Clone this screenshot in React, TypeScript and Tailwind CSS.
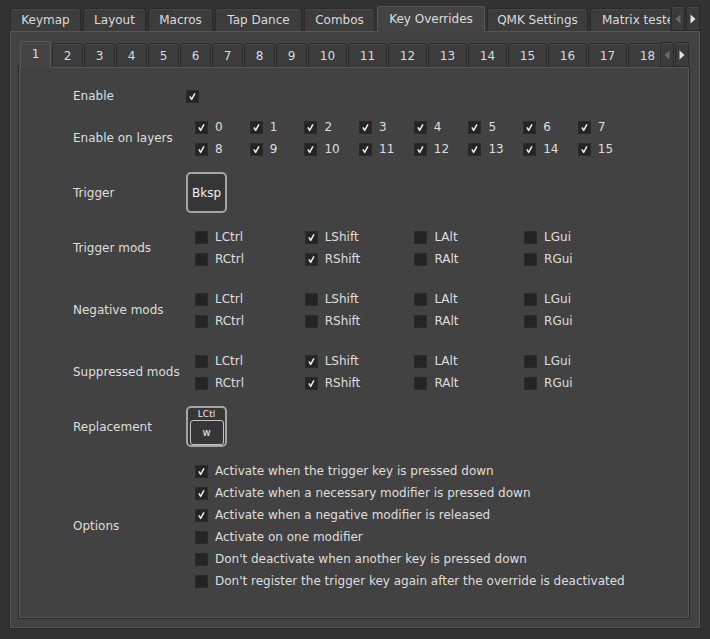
import React from 'react';

const topTabs = [
    { label: 'Keymap', w: 'w-[71px]' },
    { label: 'Layout', w: 'w-[63px]' },
    { label: 'Macros', w: 'w-[65px]' },
    { label: 'Tap Dance', w: 'w-[87px]' },
    { label: 'Combos', w: 'w-[71px]' },
    { label: 'Key Overrides', w: 'w-[108px]', active: true },
    { label: 'QMK Settings', w: 'w-[101px]' },
    { label: 'Matrix tester', w: 'w-[104px]' },
];

const numTabs = Array.from({ length: 18 }, (_, i) => i + 1);

const Tick = () => (
    <svg width="13" height="13" viewBox="0 0 13 13" className="block">
        <path d="M3.4 6.4 L5.5 10 L9.4 2.8" stroke="#ededed" strokeWidth="1.8" fill="none" strokeLinejoin="round" />
    </svg>
);

const Box: React.FC<{ on?: boolean }> = ({ on }) => (
    <span className="w-[13px] h-[13px] shrink-0 bg-[#242424] border border-[#2b2b2b] flex items-center justify-center overflow-hidden">
        {on && <Tick />}
    </span>
);

const Check: React.FC<{ on?: boolean; label: string }> = ({ on, label }) => (
    <div className="h-[22px] flex items-center gap-[7px]">
        <Box on={on} />
        <span className="whitespace-nowrap">{label}</span>
    </div>
);

const Arrow: React.FC<{ dir: 'left' | 'right' }> = ({ dir }) => (
    <div className="w-[14px] h-[25px] bg-[#3b3b3b] border border-[#2a2a2a] rounded-[2px] shadow-[inset_0_1px_0_#4a4a4a] flex items-center justify-center shrink-0">
        <svg width="6" height="10" viewBox="0 0 6 10">
            {dir === 'left' ? (
                <path d="M5.5 0.5 L0.5 5 L5.5 9.5 Z" fill="#6b6b6b" />
            ) : (
                <path d="M0.5 0.5 L5.5 5 L0.5 9.5 Z" fill="#e6e6e6" />
            )}
        </svg>
    </div>
);

const Row: React.FC<{ label: string; className?: string; children: React.ReactNode }> = ({ label, className, children }) => (
    <div className={`flex items-center ${className ?? ''}`}>
        <div className="w-[113px] shrink-0 whitespace-nowrap">{label}</div>
        {children}
    </div>
);

const Mods: React.FC<{ checked: string[] }> = ({ checked }) => {
    const names = ['LCtrl', 'LShift', 'LAlt', 'LGui', 'RCtrl', 'RShift', 'RAlt', 'RGui'];
    return (
        <div className="ml-[9px] grid grid-cols-[repeat(4,109.7px)]">
            {names.map((n) => (
                <Check key={n} label={n} on={checked.includes(n)} />
            ))}
        </div>
    );
};

const options = [
    { label: 'Activate when the trigger key is pressed down', on: true },
    { label: 'Activate when a necessary modifier is pressed down', on: true },
    { label: 'Activate when a negative modifier is released', on: true },
    { label: 'Activate on one modifier', on: false },
    { label: "Don't deactivate when another key is pressed down", on: false },
    { label: "Don't register the trigger key again after the override is deactivated", on: false },
];

export default function App() {
    const layers = [0, 1, 2, 3, 4, 5, 6, 7, 8, 9, 10, 11, 12, 13, 14, 15];
    return (
        <div className="w-[710px] h-[639px] bg-[#323232] px-[10px] pt-[6px] text-[12px] text-[#dedede] font-['DejaVu_Sans',sans-serif] overflow-hidden">
            {/* top tab bar */}
            <div className="flex items-end h-[25px]">
                <div className="flex items-end gap-[2px] w-[661px] overflow-hidden h-[26px] -mb-px relative z-10">
                    {topTabs.map((t) =>
                        t.active ? (
                            <div
                                key={t.label}
                                className={`${t.w} shrink-0 h-[26px] bg-[#444444] border border-b-0 border-[#585858] rounded-t-[3px] flex items-center justify-center pb-[1px] whitespace-nowrap`}
                            >
                                {t.label}
                            </div>
                        ) : (
                            <div
                                key={t.label}
                                className={`${t.w} shrink-0 h-[23px] mb-px bg-[#3c3c3c] border border-b-0 border-[#2b2b2b] rounded-t-[3px] shadow-[inset_0_1px_0_#484848] flex items-center justify-center whitespace-nowrap text-[#dadada] ${t.label === 'Matrix tester' ? 'justify-start pl-[11px]' : ''}`}
                            >
                                {t.label}
                            </div>
                        )
                    )}
                </div>
                <div className="flex gap-[1px] ml-px">
                    <Arrow dir="left" />
                    <Arrow dir="right" />
                </div>
            </div>

            {/* outer pane */}
            <div className="h-[597px] bg-[#424242] border border-[#575757] shadow-[0_0_0_1px_#2a2a2a] pt-[9px] pl-[8px] pr-[10px]">
                {/* inner tab bar */}
                <div className="flex items-end h-[26px] ml-px">
                    <div className="flex items-end gap-[1px] w-[639px] overflow-hidden h-[27px] -mb-px relative z-10">
                        {numTabs.map((n) =>
                            n === 1 ? (
                                <div
                                    key={n}
                                    className="w-[31px] shrink-0 h-[27px] bg-[#444444] border border-b-0 border-[#585858] rounded-t-[3px] flex items-center justify-center pb-[2px]"
                                >
                                    {n}
                                </div>
                            ) : (
                                <div
                                    key={n}
                                    className={`${n >= 10 ? 'w-[39px]' : 'w-[31px]'} shrink-0 h-[24px] mb-px bg-[#3c3c3c] border border-b-0 border-[#2b2b2b] rounded-t-[3px] shadow-[inset_0_1px_0_#484848] flex items-center justify-center text-[#dadada]`}
                                >
                                    {n}
                                </div>
                            )
                        )}
                    </div>
                    <div className="flex gap-[1px] ml-[1px]">
                        <Arrow dir="left" />
                        <Arrow dir="right" />
                    </div>
                </div>

                {/* inner pane */}
                <div className="h-[551px] bg-[#424242] border border-[#575757] shadow-[0_0_0_1px_#2a2a2a] pl-[53px] pt-[17px]">
                    <Row label="Enable" className="h-[22px]">
                        <Box on />
                    </Row>

                    <Row label="Enable on layers" className="mt-[9px]">
                        <div className="ml-[9px] grid grid-cols-[repeat(8,54.7px)]">
                            {layers.map((l) => (
                                <Check key={l} label={String(l)} on />
                            ))}
                        </div>
                    </Row>

                    <Row label="Trigger" className="mt-[12px]">
                        <div className="w-[41px] h-[41px] rounded-[5px] border-2 border-[#a5a5a5] bg-[#363636] flex items-center justify-center text-[#f0f0f0]">
                            Bksp
                        </div>
                    </Row>

                    <Row label="Trigger mods" className="mt-[13px]">
                        <Mods checked={['LShift', 'RShift']} />
                    </Row>

                    <Row label="Negative mods" className="mt-[18px]">
                        <Mods checked={[]} />
                    </Row>

                    <Row label="Suppressed mods" className="mt-[18px]">
                        <Mods checked={['LShift', 'RShift']} />
                    </Row>

                    <Row label="Replacement" className="mt-[12px]">
                        <div className="w-[41px] h-[41px] rounded-[5px] border-2 border-[#a5a5a5] bg-[#363636] flex flex-col items-center">
                            <div className="h-[12px] text-[9px] leading-[12px] text-[#ececec]">LCtl</div>
                            <div className="w-[34px] h-[25px] rounded-[3px] border-[1.5px] border-[#c4c4c4] bg-[#363636] flex items-center justify-center text-[10px] text-[#f0f0f0]">
                                w
                            </div>
                        </div>
                    </Row>

                    <Row label="Options" className="mt-[13px]">
                        <div className="ml-[9px] flex flex-col">
                            {options.map((o) => (
                                <Check key={o.label} label={o.label} on={o.on} />
                            ))}
                        </div>
                    </Row>
                </div>
            </div>
        </div>
    );
}
